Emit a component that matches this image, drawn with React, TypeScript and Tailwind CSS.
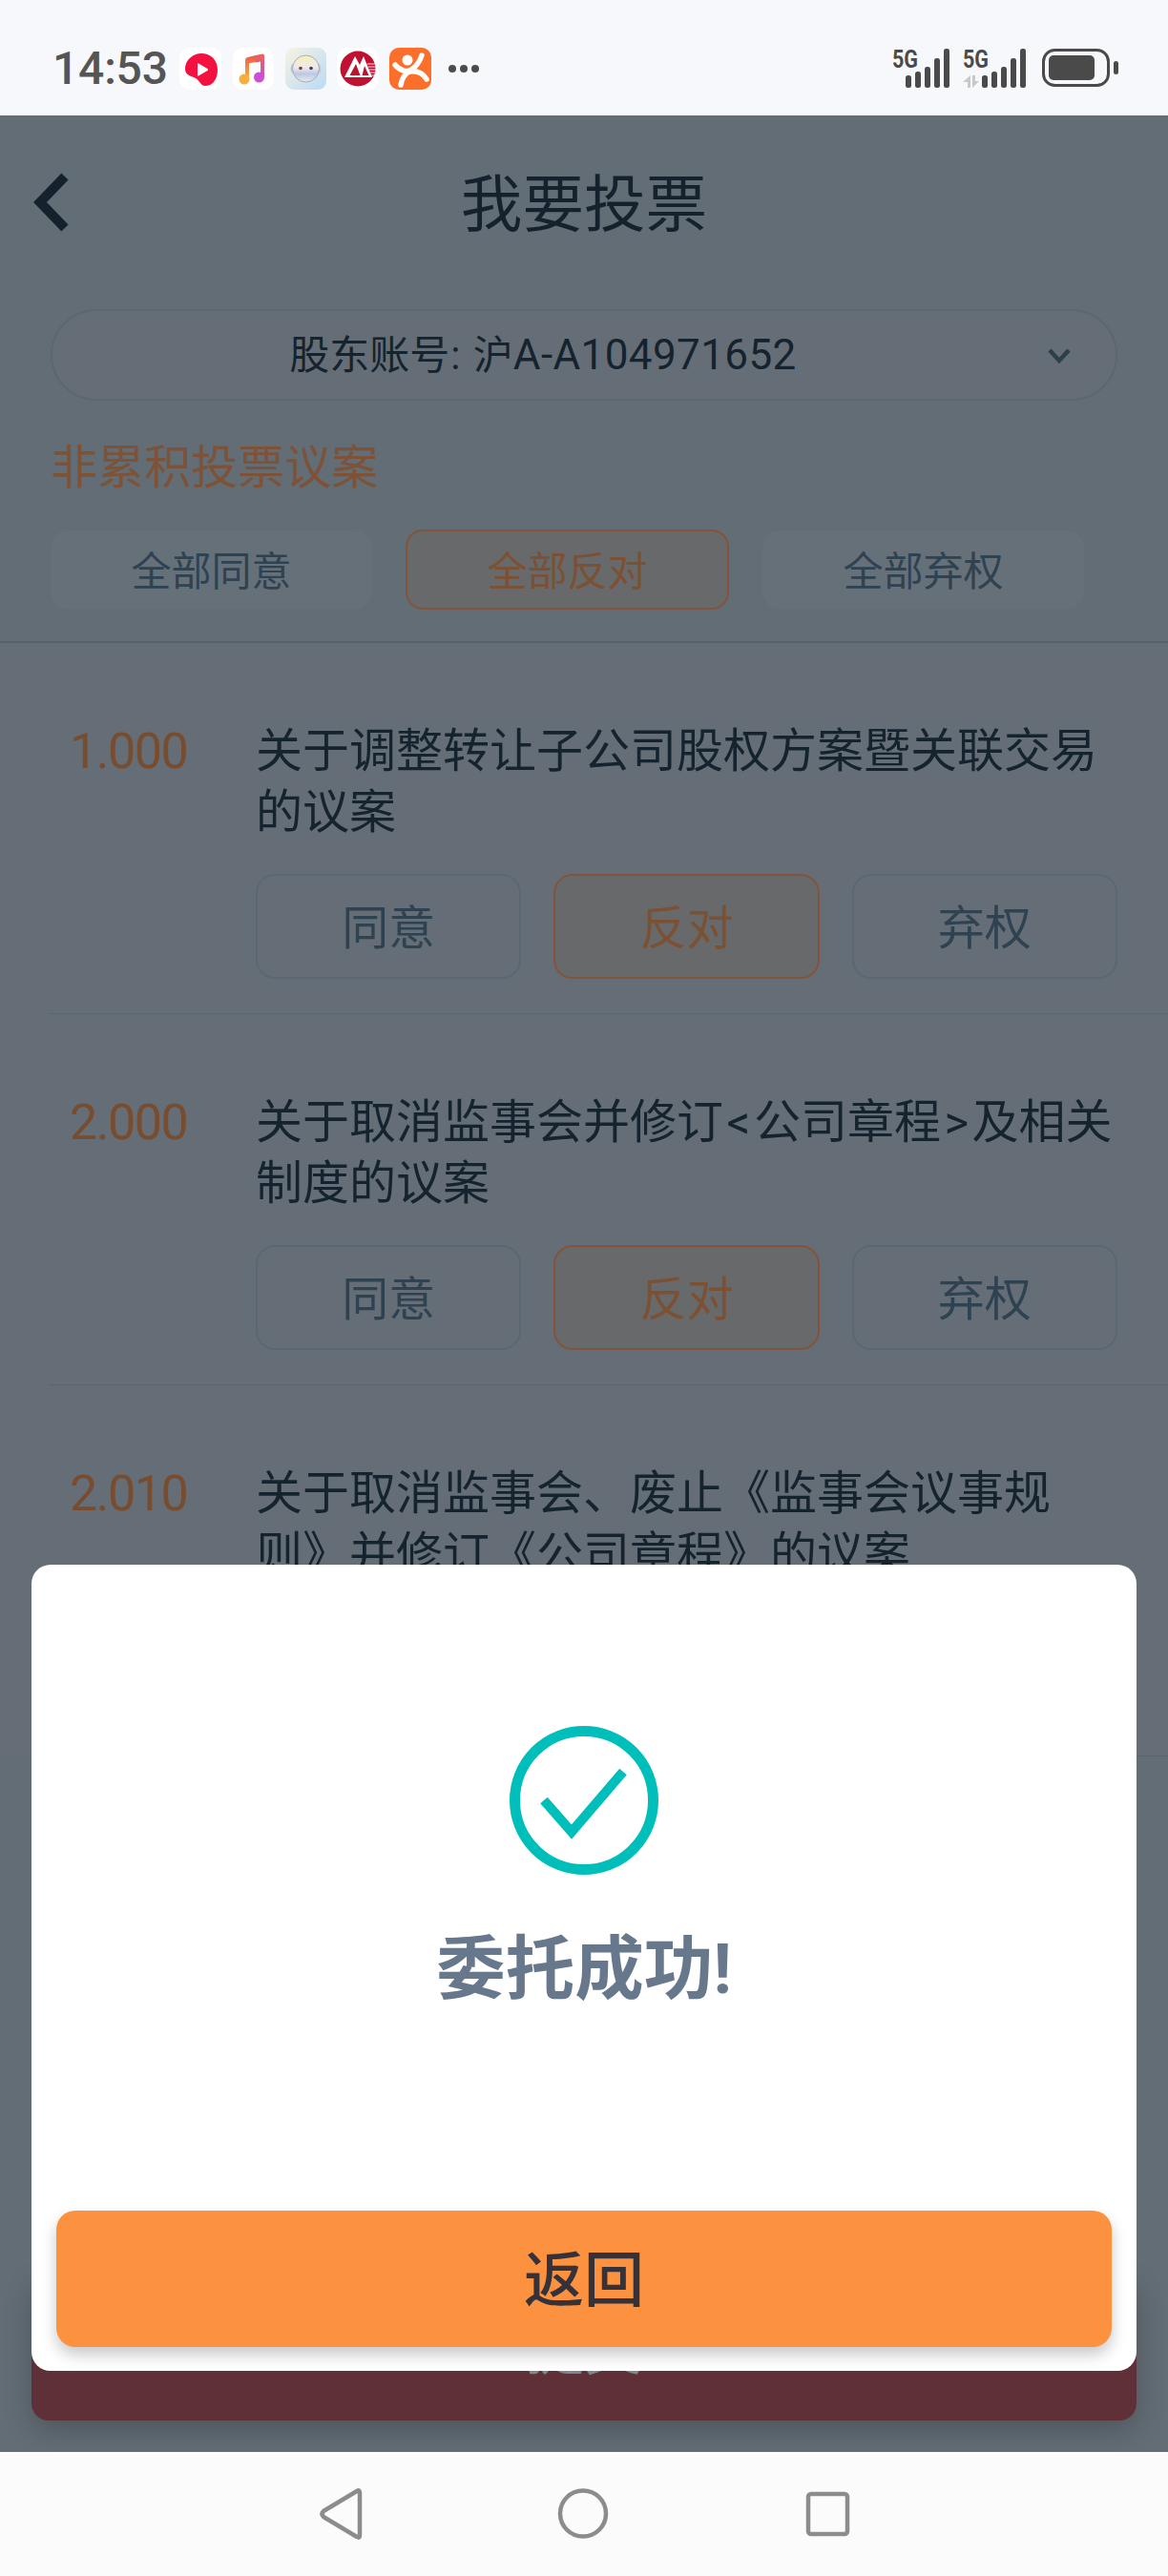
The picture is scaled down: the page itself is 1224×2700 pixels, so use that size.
import type { ReactNode } from 'react'

const proposals: { no: string; title: ReactNode }[] = [
  { no: '1.000', title: '关于调整转让子公司股权方案暨关联交易的议案' },
  {
    no: '2.000',
    title: (
      <>
        关于取消监事会并修订<span className="mx-[3.500px]">{'<'}</span>公司章程<span className="mx-[3.500px]">{'>'}</span>及相关
        <br />
        制度的议案
      </>
    ),
  },
  { no: '2.010', title: '关于取消监事会、废止《监事会议事规则》并修订《公司章程》的议案' },
]

function AppIcons() {
  return (
    <svg width="264" height="44" viewBox="0 0 264 44" className="ml-[14px]">
      <defs>
        <linearGradient id="noteL" x1="0" y1="0" x2="0" y2="1">
          <stop offset="0" stopColor="#ee5c48" />
          <stop offset="1" stopColor="#f6b63c" />
        </linearGradient>
        <linearGradient id="noteR" x1="0" y1="0" x2="0" y2="1">
          <stop offset="0" stopColor="#f0644a" />
          <stop offset="1" stopColor="#c64fdc" />
        </linearGradient>
        <linearGradient id="faceBg" x1="0" y1="0" x2="1" y2="1">
          <stop offset="0" stopColor="#f7f3e2" />
          <stop offset="1" stopColor="#b9daf8" />
        </linearGradient>
        <linearGradient id="face" x1="0" y1="0" x2="0" y2="1">
          <stop offset="0" stopColor="#f4f0b8" />
          <stop offset="0.45" stopColor="#f0e8ee" />
          <stop offset="0.7" stopColor="#bcc8e2" />
          <stop offset="1" stopColor="#e8ecf4" />
        </linearGradient>
      </defs>
      {/* video */}
      <rect width="44" height="44" rx="11" fill="#fff" />
      <path d="M23 6C33 6 40 13 40 23C40 33 35 40 27 40C22 40 21 33 15 31C9 29 6 27 6 22C6 13 14 6 23 6Z" fill="#f5113f" />
      <path d="M20 16.500L29.500 22Q30.500 23 29.500 24L20 29.500Q19 30 19 29V17Q19 16 20 16.500Z" fill="#fff" />
      {/* music */}
      <g transform="translate(56 0)">
        <rect width="43" height="44" rx="11" fill="#fff" />
        <path d="M13 34V13Q13 10.500 15.500 10L24 8V15L17 16.500V34Z" fill="url(#noteL)" />
        <circle cx="12" cy="33" r="5.500" fill="#f6b03e" />
        <path d="M24 8L31 6.500Q33 6.500 33 8.500V31H29V14.500L24 15.500Z" fill="url(#noteR)" />
        <circle cx="27.500" cy="31" r="5.500" fill="#cc50d2" />
      </g>
      {/* face */}
      <g transform="translate(111 0)">
        <rect width="43" height="44" rx="9" fill="url(#faceBg)" />
        <ellipse cx="8.500" cy="22" rx="3" ry="5" fill="#c6c8cc" />
        <ellipse cx="34.500" cy="22" rx="3" ry="5" fill="#c6c8cc" />
        <circle cx="21.500" cy="22" r="14" fill="url(#face)" stroke="#a9adb4" strokeWidth="1" />
        <circle cx="16" cy="21.500" r="1.800" fill="#6a4a2a" />
        <circle cx="27" cy="21.500" r="1.800" fill="#3c3f52" />
      </g>
      {/* bank */}
      <g transform="translate(165 0)">
        <rect width="44" height="44" rx="11" fill="#fff" />
        <circle cx="22" cy="22" r="18.500" fill="#bf1230" />
        <path d="M8 31L19 9L24 18L28 9L37 31Z" fill="#fff" />
        <path d="M13.500 29L20 17L24.500 29ZM26.500 29L29 19L33.500 29Z" fill="#bf1230" />
        <path d="M32 17H41M33 20H41M34 23H41M35 26H40.500M36 29H39.500" stroke="#fff" strokeWidth="1" opacity="0.85" />
      </g>
      {/* orange figure */}
      <g transform="translate(220 0)">
        <rect width="44" height="44" rx="10" fill="#fb6f2a" />
        <circle cx="19" cy="13" r="5.500" fill="#fff" />
        <path d="M6 18C11 24 18 26 23 23C28 20 32 14 34 8" fill="none" stroke="#fff" strokeWidth="5.500" strokeLinecap="round" />
        <path d="M22 24C17 27 13 32 12 39" fill="none" stroke="#fff" strokeWidth="5.500" strokeLinecap="round" />
        <path d="M21 25C28 24 35 26 39 33" fill="none" stroke="#fff" strokeWidth="5.500" strokeLinecap="round" />
      </g>
    </svg>
  )
}

function Signal({ arrows }: { arrows?: boolean }) {
  const x = arrows ? 20 : 14
  return (
    <svg width={arrows ? 66 : 60} height="47" viewBox={`0 -6 ${arrows ? 66 : 60} 47`}>
      <text x="0" y="20" fontFamily="Roboto" fontWeight="700" fontSize="26" fill="#4a4a4a" textLength="27" lengthAdjust="spacingAndGlyphs">5G</text>
      {arrows && (
        <g fill="#c9c9c9">
          <path d="M0 35L8 28V41H5V35Z" />
          <path d="M10 28H13V34H17L10 41Z" />
        </g>
      )}
      <rect x={x} y="28" width="6" height="13" rx="2.500" fill="#4a4a4a" />
      <rect x={x + 10} y="24" width="6" height="17" rx="2.500" fill="#4a4a4a" />
      <rect x={x + 20} y="19" width="6" height="22" rx="2.500" fill="#4a4a4a" />
      <rect x={x + 30} y="10" width="6" height="31" rx="2.500" fill="#4a4a4a" />
      <rect x={x + 40} y="0" width="6" height="41" rx="2.500" fill="#4a4a4a" />
    </svg>
  )
}

function Battery() {
  return (
    <svg width="80" height="41" viewBox="0 0 80 41" className="ml-[3px] mt-[6px]">
      <rect x="1.500" y="1.500" width="68" height="37" rx="12" fill="none" stroke="#4a4a4a" strokeWidth="3" />
      <rect x="7" y="7" width="48" height="26" rx="5" fill="#4a4a4a" />
      <rect x="75" y="13" width="5" height="14" rx="2.500" fill="#4a4a4a" />
    </svg>
  )
}

function StatusBar() {
  return (
    <div className="h-[121px] shrink-0 bg-[#f7f8fc] flex items-start pt-[50px] pl-[55px]">
      <span className="text-[48px] leading-[44px] font-medium text-[#555555] w-[119px] tracking-[-0.2px]">14:53</span>
      <AppIcons />
      <div className="flex gap-[4px] ml-[18px] mt-[18px]">
        <span className="w-[8px] h-[8px] rounded-full bg-[#4c4c4c]" />
        <span className="w-[8px] h-[8px] rounded-full bg-[#4c4c4c]" />
        <span className="w-[8px] h-[8px] rounded-full bg-[#4c4c4c]" />
      </div>
      <div className="ml-auto mr-[52px] -mt-[5px] flex items-start gap-[14px]">
        <Signal />
        <Signal arrows />
        <Battery />
      </div>
    </div>
  )
}

function ProposalRow({ no, title }: { no: string; title: ReactNode }) {
  return (
    <div className="ml-[52px] pl-[21px] pr-[53px] pt-[82px] pb-[36px] border-b border-[#5a6570] flex">
      <div className="w-[195px] shrink-0 text-[52px] leading-[64px] tracking-[-1.500px] text-[#774c2f]">{no}</div>
      <div className="flex-1 min-w-0">
        <p className="h-[128px] text-[49px] leading-[64px] text-[#15232f]">{title}</p>
        <div className="grid grid-cols-3 gap-[34px] mt-[32px]">
          <button className="h-[110px] pt-[5px] rounded-[20px] border-2 border-[#5b6772] text-[49px] text-[#2f4252]">同意</button>
          <button className="h-[110px] pt-[5px] rounded-[20px] border-2 border-[#82553a] bg-[#68696b] text-[49px] text-[#7c5032]">反对</button>
          <button className="h-[110px] pt-[5px] rounded-[20px] border-2 border-[#5b6772] text-[49px] text-[#2f4252]">弃权</button>
        </div>
      </div>
    </div>
  )
}

function SuccessDialog() {
  return (
    <div className="absolute left-[33px] right-[33px] top-[1519px] h-[845px] bg-white rounded-[20px] flex flex-col items-center">
      <svg width="158" height="158" viewBox="0 0 158 158" className="mt-[168px]">
        <circle cx="79" cy="79" r="72.500" fill="none" stroke="#00bfbb" strokeWidth="11" />
        <path d="M37 79L66 112L120 49" fill="none" stroke="#00bfbb" strokeWidth="10" />
      </svg>
      <div className="mt-[54px] text-[72.500px] leading-[90px] font-bold text-[#68788c]">委托成功!</div>
      <button className="mt-auto mb-[25px] w-[1106px] h-[143px] pt-[5px] rounded-[20px] bg-[#fc9140] text-[63px] font-medium text-[#36323a] shadow-[0_8px_16px_rgba(0,0,0,0.22)]">
        返回
      </button>
    </div>
  )
}

function NavBar() {
  return (
    <div className="h-[130px] shrink-0 bg-[#fbfbfb] flex items-start justify-center">
      <svg width="600" height="130" viewBox="0 0 600 130">
        <g fill="none" stroke="#8c8c8c" strokeWidth="4.500" strokeLinejoin="round">
          <path d="M62 41Q65 39 65 43V87Q65 91 62 89L27 68Q24 65 27 62Z" />
          <circle cx="299" cy="64.500" r="24" />
          <rect x="535" y="44" width="41" height="42" rx="3" />
        </g>
      </svg>
    </div>
  )
}

export default function App() {
  return (
    <div className="w-[1224px] h-[2700px] flex flex-col overflow-hidden font-[Roboto,'Noto_Sans_CJK_SC',sans-serif]">
      <StatusBar />
      <div className="relative flex-1 min-h-0 overflow-hidden bg-[#636d75]">
        <div className="h-[182px] pl-[30px] flex items-center">
          <svg width="48" height="70" viewBox="0 0 48 70">
            <path d="M38 8L12 35L38 62" fill="none" stroke="#15222e" strokeWidth="10" />
          </svg>
          <h1 className="flex-1 text-center text-[64.600px] leading-[80px] text-[#15222e] pr-[78px] pt-[6px]">我要投票</h1>
        </div>

        <div className="mx-[53px] mt-[21px] h-[96px] rounded-full border-2 border-[#5c6771] bg-[#656e77] flex items-center">
          <span className="flex-1 text-center text-[42px] leading-[56px] text-[#15232f]">
            股东账号<span className="ml-[1px] mr-[3px]">:</span> 沪<span className="text-[44px] tracking-[0.4px]">A-A104971652</span>
          </span>
          <svg width="24" height="18" viewBox="0 0 24 18" className="ml-[15px] mr-[47px] mt-[2px]">
            <path d="M2 3L12 14L22 3" fill="none" stroke="#2e3f4c" strokeWidth="4.500" />
          </svg>
        </div>

        <div className="border-b-2 border-[#56616b] pb-[33px]">
          <h2 className="mx-[53px] mt-[39px] text-[49px] leading-[64px] text-[#7d5236]">非累积投票议案</h2>
          <div className="ml-[53px] mt-[32px] flex items-center gap-[35px] h-[84px]">
            <button className="w-[337px] h-[82px] pt-[5px] rounded-[18px] bg-[#667079] text-[42px] text-[#2f4252]">全部同意</button>
            <button className="w-[339px] h-[84px] pt-[5px] rounded-[18px] border-2 border-[#82553a] bg-[#68696b] text-[42px] text-[#7c5032]">全部反对</button>
            <button className="w-[337px] h-[82px] pt-[5px] rounded-[18px] bg-[#667079] text-[42px] text-[#2f4252]">全部弃权</button>
          </div>
        </div>

        <div className="bg-[#656e76]">
          {proposals.map((p) => (
            <ProposalRow key={p.no} no={p.no} title={p.title} />
          ))}
        </div>

        {/* 底部提交按钮，被弹窗压住大半 */}
        <div className="absolute left-[33px] right-[33px] bottom-[33px] h-[152px] pt-[5px] rounded-[18px] bg-[#5f3038] flex items-center justify-center text-[61.200px] text-[#7b868d] shadow-[0_10px_30px_rgba(0,0,0,0.22)]">
          提交
        </div>

        <SuccessDialog />
      </div>
      <NavBar />
    </div>
  )
}
